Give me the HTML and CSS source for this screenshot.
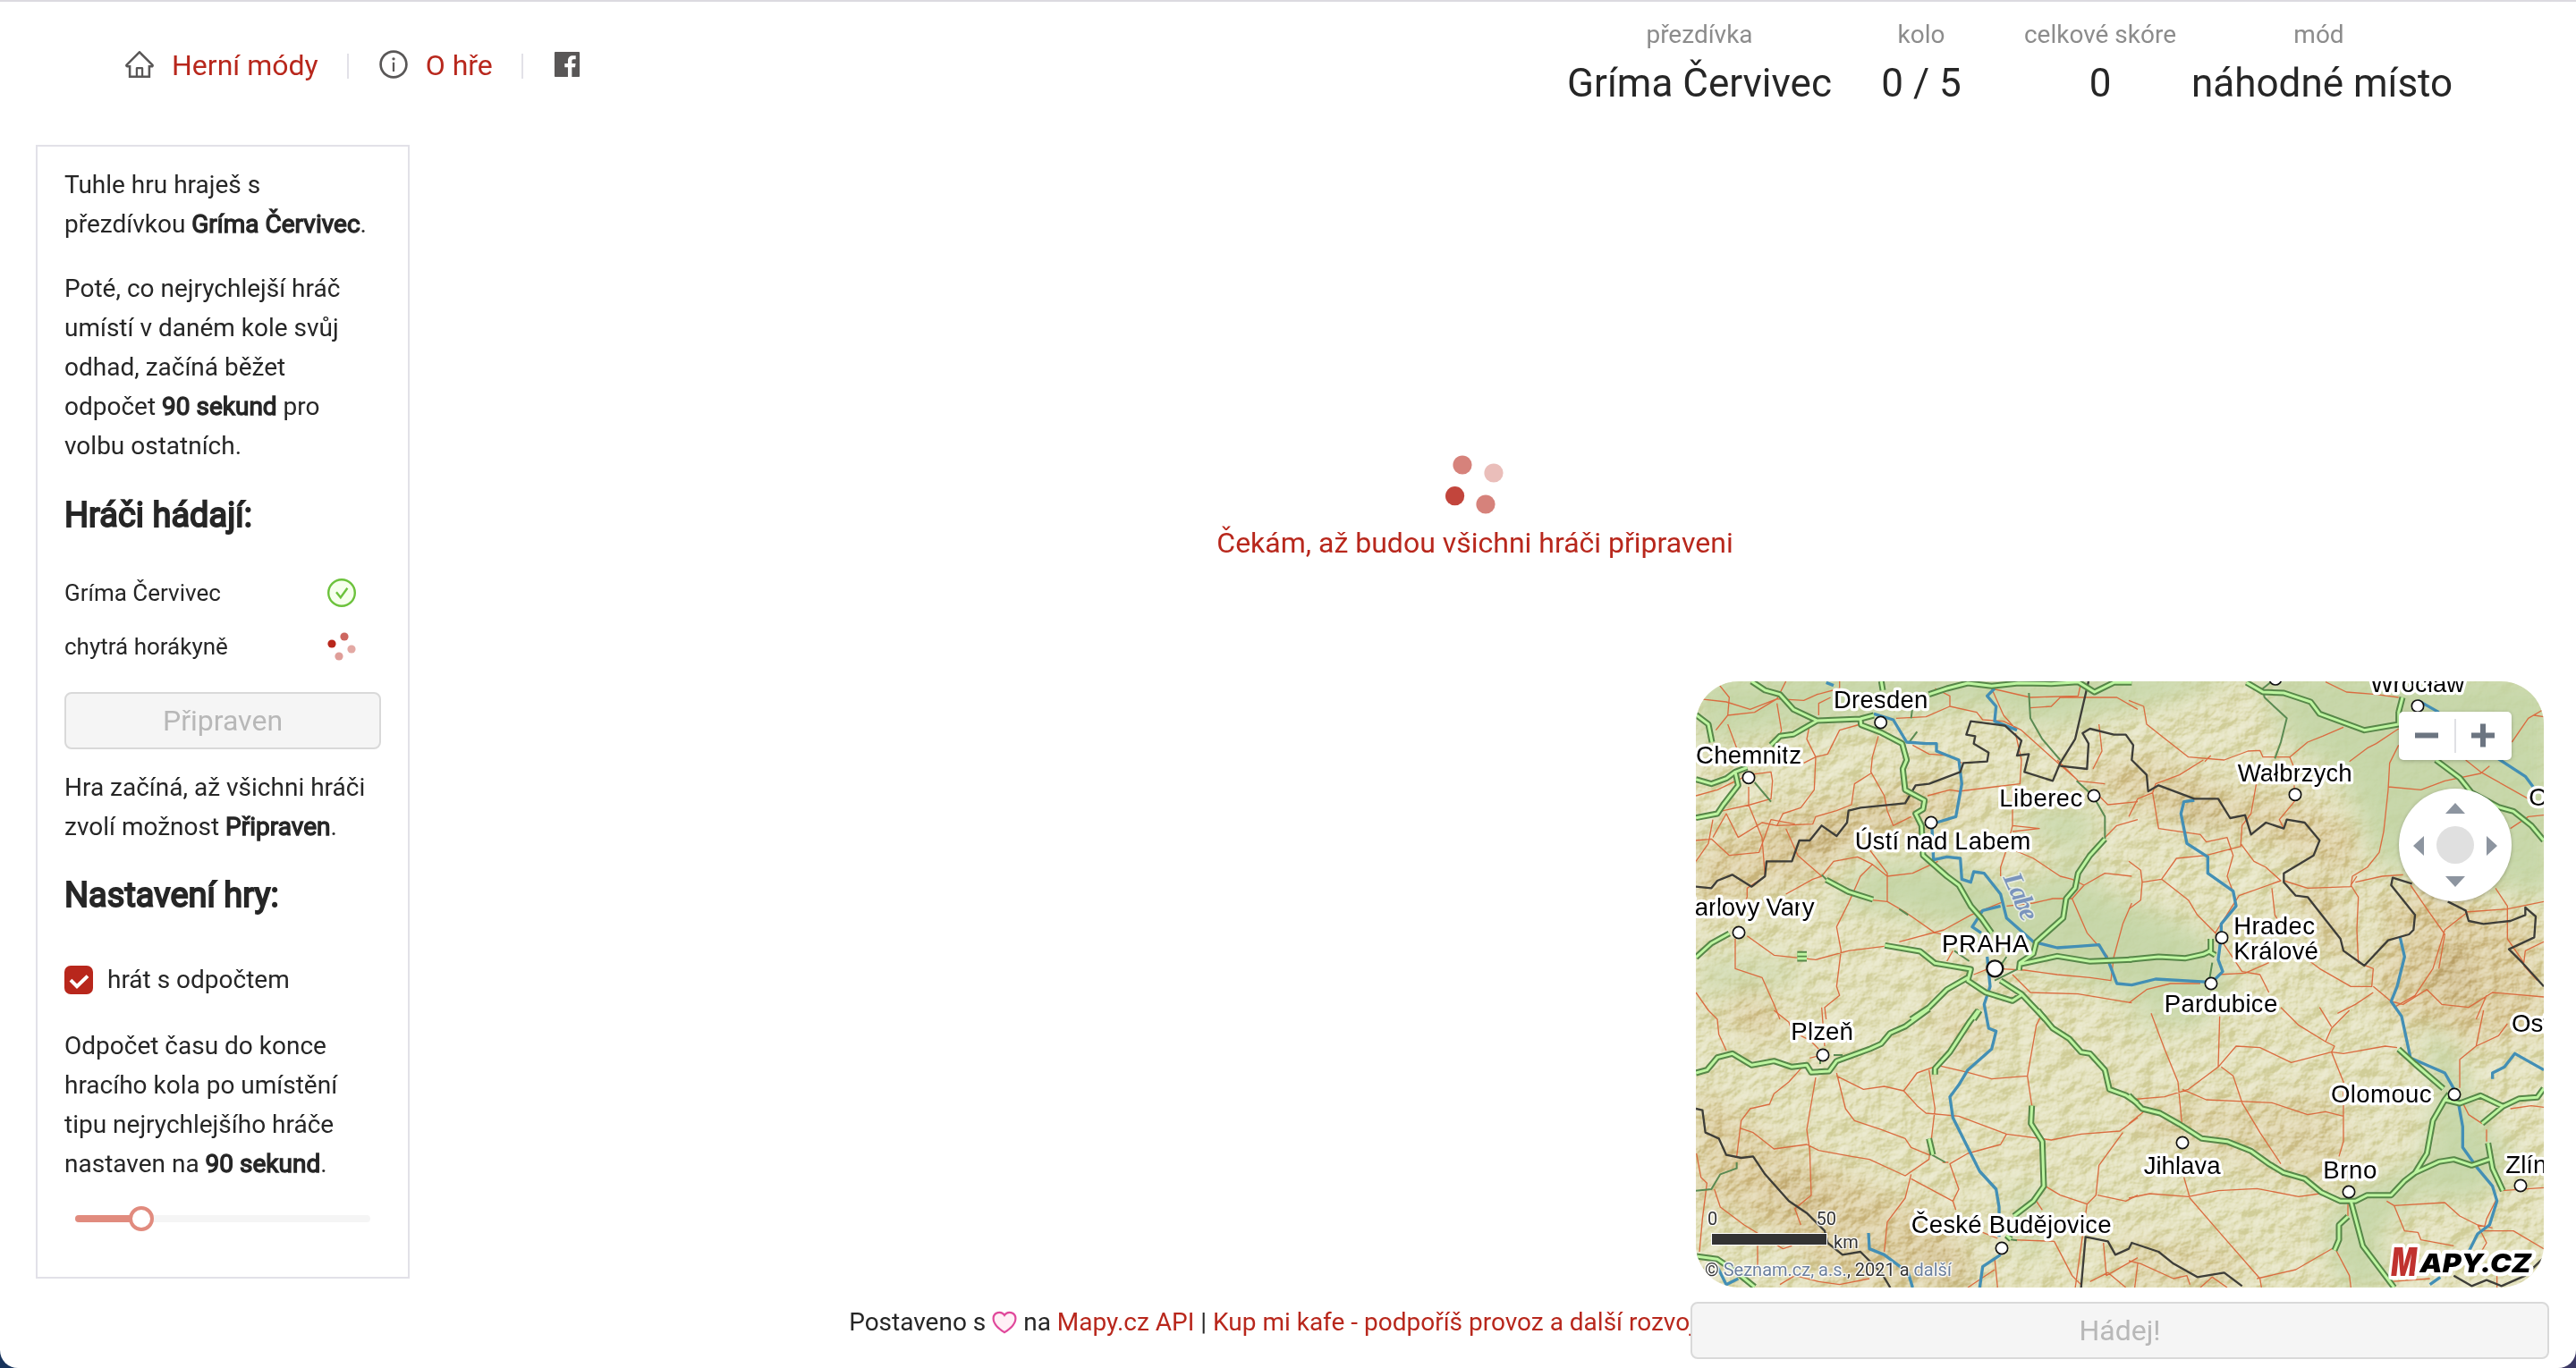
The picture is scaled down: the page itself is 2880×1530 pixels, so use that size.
FILE: index.html
```html
<!DOCTYPE html>
<html lang="cs">
<head>
<meta charset="utf-8">
<title>Náhodné místo</title>
<link rel="stylesheet" href="styles.css">
</head>
<body>
<div class="page">
  <header class="header">
    <nav class="nav">
      <a class="nav-item" href="#"><svg class="icon" viewBox="0 0 1024 1024"><path d="M946.5 505L560.1 118.8l-25.9-25.9a31.5 31.5 0 00-44.4 0L77.5 505a63.9 63.9 0 00-18.8 46c.4 35.2 29.7 63.3 64.9 63.3h42.5V940h691.8V614.3h43.4c17.1 0 33.2-6.7 45.3-18.8a63.6 63.6 0 0018.7-45.3c0-17-6.7-33.1-18.8-45.2zM568 868H456V664h112v204zm217.9-325.7V868H632V640c0-22.1-17.9-40-40-40H432c-22.1 0-40 17.9-40 40v228H238.1V542.3h-96l370-369.7 23.1 23.1L882 542.3h-96.1z"/></svg><span>Herní módy</span></a>
      <i class="divider"></i>
      <a class="nav-item" href="#"><svg class="icon" viewBox="0 0 1024 1024"><path d="M512 64C264.6 64 64 264.6 64 512s200.6 448 448 448 448-200.6 448-448S759.4 64 512 64zm0 820c-205.4 0-372-166.6-372-372s166.6-372 372-372 372 166.6 372 372-166.6 372-372 372z"/><path d="M464 336a48 48 0 1096 0 48 48 0 10-96 0zm72 112h-48c-4.4 0-8 3.6-8 8v272c0 4.4 3.6 8 8 8h48c4.4 0 8-3.6 8-8V456c0-4.4-3.6-8-8-8z"/></svg><span>O hře</span></a>
      <i class="divider"></i>
      <a class="nav-item" href="#"><svg class="icon" viewBox="0 0 1024 1024"><path d="M880 112H144c-17.7 0-32 14.3-32 32v736c0 17.7 14.3 32 32 32h736c17.7 0 32-14.3 32-32V144c0-17.7-14.3-32-32-32zm-92.4 233.5h-63.9c-50.1 0-59.8 23.8-59.8 58.8v77.1h119.6l-15.6 120.7h-104V912H539.2V602.2H434.9V481.4h104.3v-89c0-103.3 63.1-159.6 155.3-159.6 44.2 0 82.1 3.3 93.2 4.8v107.9z"/></svg></a>
    </nav>
    <dl class="stats">
      <div><dt>přezdívka</dt><dd>Gríma Červivec</dd></div>
      <div><dt>kolo</dt><dd>0 / 5</dd></div>
      <div><dt>celkové skóre</dt><dd>0</dd></div>
      <div><dt>mód</dt><dd>náhodné místo</dd></div>
    </dl>
  </header>

  <main class="main">
    <aside class="sidebar">
      <p>Tuhle hru hraješ s<br>přezdívkou <b>Gríma Červivec</b>.</p>
      <p>Poté, co nejrychlejší hráč<br>umístí v daném kole svůj<br>odhad, začíná běžet<br>odpočet <b>90 sekund</b> pro<br>volbu ostatních.</p>
      <h2>Hráči hádají:</h2>
      <ul class="players">
        <li><span>Gríma Červivec</span><svg class="status" viewBox="0 0 32 32"><circle cx="16" cy="16" r="14.8" fill="#f6ffed" stroke="#6cc23c" stroke-width="2.4"/><path d="M10 15.2l4.8 6L22.4 10.800" fill="none" stroke="#6cc23c" stroke-width="2.400"/></svg></li>
        <li><span>chytrá horákyně</span><svg class="status" viewBox="0 0 32 32" fill="#b8271c"><circle cx="19" cy="5" r="4.600" opacity=".7"/><circle cx="27" cy="19" r="4.600" opacity=".4"/><circle cx="5" cy="13" r="4.600"/><circle cx="13" cy="27" r="4.600" opacity=".45"/></svg></li>
      </ul>
      <button class="button" disabled>Připraven</button>
      <p>Hra začíná, až všichni hráči<br>zvolí možnost <b>Připraven</b>.</p>
      <h2 class="settings-title">Nastavení hry:</h2>
      <label class="check"><svg viewBox="0 0 32 32"><rect width="32" height="32" rx="7" fill="#b8271c"/><path d="M7 16.200l7 7L26 11.600" fill="none" stroke="#fff" stroke-width="4"/></svg><span>hrát s odpočtem</span></label>
      <p>Odpočet času do konce<br>hracího kola po umístění<br>tipu nejrychlejšího hráče<br>nastaven na <b>90 sekund</b>.</p>
      <div class="slider"><div class="slider-fill"></div><div class="slider-handle"></div></div>
    </aside>
    <section class="waiting">
      <svg class="spinner" viewBox="0 0 66 66" fill="#b8271c"><circle cx="19" cy="11" r="10.600" opacity=".58"/><circle cx="54" cy="20" r="10.600" opacity=".3"/><circle cx="10.600" cy="45.700" r="10.600" opacity=".86"/><circle cx="45" cy="55" r="10.600" opacity=".58"/></svg>
      <p>Čekám, až budou všichni hráči připraveni</p>
    </section>
  </main>

  <footer class="footer">
    <span>Postaveno s <svg class="heart" viewBox="0 0 28 26"><path d="M14 24.200C8 20 1.600 15.500 1.600 8.600C1.600 1.600 10.500-.4 14 5C17.500-.4 26.400 1.600 26.400 8.600C26.400 15.500 20 20 14 24.200z" fill="#fff0f6" stroke="#e0489b" stroke-width="2.200"/></svg> na <a href="#">Mapy.cz API</a> | <a href="#">Kup mi kafe - podpoříš provoz a další rozvoj</a></span>
  </footer>

  <div class="guess">
    <div class="map">
      <svg class="map-canvas" viewBox="18 36 2844 2034">
        <defs>
          <filter id="soft" x="-30%" y="-30%" width="160%" height="160%"><feGaussianBlur stdDeviation="42"/></filter>
          <filter id="relief" x="0" y="0" width="100%" height="100%" color-interpolation-filters="sRGB">
            <feTurbulence type="fractalNoise" baseFrequency="0.015 0.017" numOctaves="4" seed="11" result="n"/>
            <feColorMatrix in="n" values="0 0 0 0 0  0 0 0 0 0  0 0 0 0 0  1 0 0 0 0"/>
            <feDiffuseLighting surfaceScale="18" diffuseConstant="1" lighting-color="#fff"><feDistantLight azimuth="225" elevation="31"/></feDiffuseLighting>
          </filter>
          <g id="motorways">
            <path d="M205 36L250 66 300 80 345 130 425 168 570 162 615 150M640 36L645 66M425 168L345 214 300 220 270 250M570 162L572 182 640 208 710 245 725 300 712 330 720 400 785 435 780 465 755 480 775 520 780 620 860 690 900 720 940 790 975 830 1010 880M800 80L860 60 930 42 1010 52 1100 42 1210 44 1300 38 1355 72 1420 40 1480 40M18 148L60 180 72 240M18 365L70 380 120 362 150 340 190 325M150 340L160 385 110 450 90 480 18 494M455 702L530 742 612 768M18 962L70 915 130 882M652 922L770 942 820 982 940 1002 930 1040 990 1080 1080 1108 1110 1088M930 1030L860 1070 800 1130 740 1170M1040 1040L1110 1085 1190 1170M970 1140L950 1170M1390 565L1340 620 1300 680 1290 730 1260 765 1250 830 1160 910 1150 950 1105 980 1102 1005M1105 985L1230 958 1340 976 1480 970M358 952H390M358 966H390"/>
            <g transform="translate(1470 0)"><path d="M0 970L100 960 190 965 250 952 275 940V900M265 940L290 955M395 40L450 72 520 75 610 105 640 145 790 200 905 180V138M918 90L905 140M1030 300L1110 360 1150 410 1240 458 1290 472 1350 520 1392 570"/></g>
            <g transform="translate(0 1140)"><path d="M18 210L55 200 90 158 140 145 205 184 280 170 340 190 390 184 405 208 465 204 490 170 600 130 640 112 670 76 720 54 780 10 800 -5M965 0L935 40 870 140 820 195V215M1165 0L1215 60 1270 95 1310 140 1340 145 1390 200 1405 265 1460 285 1500 312M1145 320L1142 380 1180 440 1185 590 1150 640 1085 690M800 430L813 485M18 825L90 835 150 875 215 928M1060 755L1075 768"/></g>
            <g transform="translate(1470 1140)"><path d="M0 285L45 330 105 345 170 382 245 430 330 440 410 472 470 515 520 545 590 565 645 610 710 640 760 640 800 620 880 620 925 572 960 545 1000 480 1020 370 1060 300 1075 280M1060 300L1110 312 1180 286 1255 322 1310 296 1370 292 1392 262M1255 322L1185 380M905 130L960 180 1055 262M960 545L1040 508 1090 500 1150 520 1210 500M1205 445L1220 530 1255 605M745 640L785 790 890 930M735 692L705 720 705 770 690 805"/></g>
          </g>
        </defs>

        <rect x="18" y="36" width="2844" height="2034" fill="#e3e1bd"/>
        <g filter="url(#soft)" fill="#dccb9e" opacity=".8">
          <path d="M18 600L300 470 600 430 760 360 950 380 900 480 640 540 420 690 200 760 18 830z"/>
          <path d="M1300 330L1560 290 1830 420 2000 430 2260 540 2210 700 2050 620 1800 520 1640 500 1440 450z"/>
          <path d="M2000 700L2150 720 2240 980 2150 960zM2400 700L2840 850 2862 1200 2640 1250 2420 1190 2270 1050zM2240 740L2400 780 2380 860z"/>
          <path d="M18 1400L250 1550 420 1650 700 1770 900 1880 950 2070 500 2070 300 1900 18 1760zM200 1050L330 1170 250 1240 90 1150z"/>
          <path d="M1500 1450L2160 1420 2250 1700 2000 1700 1500 1550zM800 1150L1000 1140 1000 1290 870 1290zM1450 1900L1850 1950 1850 2070 1450 2070z" opacity=".65"/>
        </g>
        <g filter="url(#soft)" fill="#b99e6b" opacity=".4"><path d="M300 610L480 530 560 540 400 630zM560 500L740 430 750 460 640 520zM1610 430L1790 460 1770 530 1620 470zM2560 900L2640 1040 2560 1110 2480 1020zM300 1700L440 1780 430 1830 300 1760zM780 1940L900 1990 920 2060 760 2000z"/></g>
        <rect class="relief" x="18" y="36" width="2844" height="2034" filter="url(#relief)"/>
        <g filter="url(#soft)" fill="#c3d5a6" opacity=".86">
          <path d="M18 0H1900L1640 90 1200 190 980 120 700 150 300 200 18 250z"/>
          <path d="M1900 0H2900V760L2440 690 2300 640 2240 480 2160 330 2000 250z"/>
          <path d="M600 650L850 640 1050 720 1240 690 1500 780 1720 880 1820 1050 1700 1200 1440 1080 1180 1000 900 860 480 770zM1120 470L1350 470 1350 580 1150 560z"/>
          <path d="M2460 1160L2560 1280 2640 1480 2760 1640 2640 1780 2440 1760 2300 1900 2360 2070 2180 2070 2130 1860 2200 1760 2460 1650 2500 1420z"/>
          <path d="M1450 1140L1700 1130 1650 1200 1480 1200zM1080 1720L1220 1770 1160 2000 1080 1900zM1250 560L1400 700 1300 1000 1120 900zM30 960L260 960 420 1020 300 1060 30 1100z" opacity=".6"/>
        </g>

        <g class="road">
          <path d="M90 40L130 90 125 150 85 200M30 95L120 105 200 130 290 95 380 100 425 80 500 60V36M125 150L215 140 290 95 320 36M125 180L155 260M290 110L305 200 290 250M430 150L430 110 470 90M570 180L500 200 460 280 420 290 390 230 400 180M420 290L415 400 370 460 310 480 290 520M420 290L380 310M630 220L610 290 605 340 650 420 660 470 680 520 740 490M605 345L550 380 540 450 490 470 420 490 410 515 290 520 240 510 160 560 120 480 75 560M18 420L90 400 195 350 270 340 275 370 270 430 200 450 110 470 18 500M195 390V450L240 560 250 690M18 570L70 565 130 620 230 610 270 500 350 515M18 640L60 580 75 500M320 530L360 620 440 690 480 640 560 625 610 650 570 690 530 780 490 860 505 940 490 1060 500 1090 450 1130 455 1170M610 650L660 690 745 680 830 640M600 600L660 680V775L610 770M660 775L720 810 820 880 930 900M690 160L790 155 870 120 960 140 980 165 1050 170 1110 200 1210 290 1290 360M870 120L870 85 820 60M1010 60L1140 90 1300 85 1310 40M1140 125L1210 120 1240 90 1430 90 1500 130M1010 60L1050 150 1090 195M1090 210L1110 300 1105 380 1020 390 900 405 870 400 795 420M1080 400L1080 520 1060 600 1040 660V690M1080 540L1170 530 1080 520M1080 600L1150 630 1240 690 1280 700 1320 720 1390 680 1480 690M1320 720L1280 765 1215 765 1150 780 1060 790M1280 765L1330 880 1400 960M1480 780L1450 850 1420 960 1410 1040 1340 1030 1230 1020 1120 1005 1030 1000M700 910L850 870 940 820 1050 775M190 890L280 955 420 970 530 940 650 925M150 900V1000L240 1030 280 1120 300 1170M190 760V730L250 690M160 830L190 760M320 750L410 700 440 690M1080 1020L1140 1080 1300 1085 1480 1115M1390 560L1430 520 1500 500M1350 400L1400 450 1500 440M1370 180L1380 270 1350 330M1230 300L1300 370 1390 380M745 250L800 280 870 285 910 310M880 940L860 975M950 1020L1000 1000M60 1140L18 1080"/>
          <g transform="translate(1470 0)"><path d="M0 100L50 120 60 180 110 220 200 290 320 300 400 270 440 268 450 290 540 290 600 240 650 220 720 190M250 300L170 350 90 380 80 410 30 430 0 490M275 285L255 305M660 38L730 72 830 80 905 90M740 305L800 260 830 245 905 195M905 250L875 310 870 400 855 540 840 610 800 660 750 690 745 725 600 730 520 705M870 390L980 400 1060 370 1180 345 1210 320M1130 300L1180 340 1340 430M1285 240L1340 160 1392 130M1360 150L1392 155M1280 530L1340 490 1392 485M555 385V440L505 500 520 530M540 290L560 340 540 370M440 310L410 480 380 520 375 590 260 620M80 410L100 530 240 550 260 575 330 560 350 620 330 690 360 770M375 580L420 640 460 660 510 705 370 755 290 880M0 640L40 670 45 710 40 770 0 800M45 710L110 700 160 630 260 620M110 700L200 770 230 820 300 890 380 1010 440 1020 470 1080M480 730L490 820 520 870M765 690L745 720 770 760 765 870 770 980 820 1000 815 1060 745 1060 640 1000 600 970M760 710L850 690 920 685M945 720L1000 800 1060 885 1040 1000M1130 810L1270 800 1392 775M1230 730L1270 790V900L1325 980 1330 940 1392 910M1325 990L1370 1040M1130 815L1060 870 1020 1000 960 1090 890 1130M300 1020L390 1015 470 980M0 1115L60 1070 140 1050 240 1050M820 1060L880 1110 920 1120 1000 1070 1050 1120 1140 1130 1220 1080 1392 1095M820 1080L760 1120 700 1150M1200 1090L1165 1170"/></g>
          <g transform="translate(0 1140)"><path d="M60 0L90 30 95 80 120 135M280 0L330 40 340 70 400 100 430 130M440 -10L450 120M400 160L440 150M375 190L330 240 280 280 265 315 200 330 170 370 155 490M165 395L210 410 280 465 390 450 430 470 540 490 600 500 720 555 800 500 820 330 800 200M420 225L390 400 400 470 405 620 350 665 370 720M490 210L520 330 550 370 640 400 720 430 740 460 800 485M490 220L580 265 650 255 715 270 760 210 830 185M715 270L760 320 790 345 900 355 1060 415 1210 435 1310 415 1440 405 1500 360M830 185L930 208 1010 230 1130 220 1160 50 1180 10M1130 220L1145 320M1060 415L1040 450 930 480 870 515 900 600 880 640 740 565M880 640L890 670M740 550L720 630 660 710 650 810M865 510L845 510M1450 410L1370 520 1360 620 1330 650 1280 1005M1365 620L1460 640 1500 620M1190 590L1240 620 1330 650M1160 640L1180 670M20 480L35 560 55 580 40 700 30 810M80 600L100 660 180 720 310 800 340 790M225 790V870M300 920L350 890 430 910 500 920 600 900M1080 770L1220 775 1280 890 1310 920M980 745L1030 765M1020 830L1030 930M930 930L1020 870M1385 780L1395 890 1500 830M1340 910L1400 880 1460 930"/></g>
          <g transform="translate(1470 1140)"><path d="M75 10L120 130 165 240 180 400M305 20L300 190 200 265 120 290 0 300M180 265L260 300 370 305 480 310 600 350 660 340 720 355M300 190L360 120 440 125 545 175 680 140 720 145 860 120 900 125M310 190L350 220 380 310 440 410 510 515M510 -10L570 50 660 105 690 120 680 140 720 240 720 440 705 490M660 105L680 60 740 0M640 -10L680 55M1190 0L1165 120 1110 165V260M1165 120L1240 85 1270 45M1200 400V440M1120 310L1140 350 1185 380M1280 330L1350 320 1392 325M0 630L70 615 200 625 300 605 430 598 570 625 640 615M185 560L205 630 300 740 440 900 445 930M430 900L560 870 690 795 740 890 745 930M735 640V690M865 640L890 655 1060 645 1110 690 1170 720 1220 730M890 655L925 740 970 745 980 770 1090 790M1235 630L1200 700 1190 740 1290 740 1392 800M1250 605L1392 595M0 840L40 850 150 900 195 890 205 920M30 850L20 930M240 930L280 895 330 930M0 380L50 340M1170 720L1200 780 1170 830M880 910L1010 900M1235 890V930"/></g>
        </g>
        <g class="minor">
          <path d="M1135 75L1140 160 1180 230 1240 300M215 375L270 440M440 685L460 705M1295 370L1350 420 1390 490V565M700 800L730 820M740 160L745 120M730 245L760 205M885 940L935 975M1020 1040L1100 1000M1040 990L1060 960M435 1290V1320M480 1290H510"/>
          <path d="M1925 90L2000 160 1980 240 1960 295M1945 40L1920 60 1925 90M1740 1040L1750 980M155 1650L155 1670 100 1690 70 1740 18 1745M810 1625L855 1650M1070 1908L1095 1912"/>
        </g>
        <g class="river">
          <path d="M615 145L680 165 725 240 790 245 825 245 825 270 900 300 910 380 890 490 825 510M810 530L815 635 860 625 905 630 910 700 940 710 950 675 985 680 1040 750 1060 830 1150 910 1230 930 1300 925 1370 920 1400 970 1430 1050 1480 1055 1560 1035 1740 1045M1040 790L980 805 945 860 975 880M995 960L1005 1060 985 1120 1000 1200 1025 1210 1010 1270 930 1340 900 1390 870 1430 880 1500 920 1580 970 1680 1025 1740 1035 1800V1900M1040 1960L980 2000 970 2070M1020 60L995 85 1025 120 1020 170 1095 200M455 40L480 50"/>
          <path d="M1690 435L1655 440 1645 480 1665 580 1735 625 1735 680 1820 740 1830 790 1780 850V890L1770 970 1785 1010 1745 1050M2380 895L2395 960 2370 1060 2350 1110 2385 1160 2415 1300 2530 1350 2570 1420 2590 1530 2590 1600 2640 1670 2690 1730 2705 1780 2680 1860 2640 1890 2610 1950M2480 2060L2515 2035M2690 1370V1350L2730 1330 2765 1285 2862 1340M2440 100L2510 140M2700 290L2800 355 2830 395M597 1887L600 1940 650 1960 730 2020 745 2070M90 2000L120 2060 160 2040"/>
        </g>
        <g class="border">
          <path d="M18 725L70 730 90 705 140 685 205 725 250 690 255 640 340 640 365 570 400 570 440 520 490 555 525 510 530 470 570 460 720 445 755 385 800 380 905 340 915 310 995 305 1000 275 950 245 955 220 925 215 940 170 1055 185 1110 235 1095 285 1135 280 1120 340 1215 370 1240 310 1290 230 1335 36M1240 320L1330 330 1335 245 1315 210 1340 195 1420 215 1460 215 1485 250 1480 300 1530 350 1535 405 1570 385 1690 430 1770 430 1810 495 1860 485 1880 550 1930 510 1990 530 2000 500 2060 510 2110 570 2090 620 1990 680 1990 710 2030 755 2070 760 2180 900 2190 940 2260 990 2340 905 2410 885 2425 870 2430 820 2350 720 2355 695 2420 715M2540 775L2600 805 2610 840 2660 850 2750 840 2800 820V795L2835 825 2830 895 2745 935 2790 980 2862 1060"/>
          <path d="M18 1470L40 1475 50 1550 95 1570 120 1625 170 1635 210 1630 250 1690 330 1780 390 1820 450 1880 460 1920 510 1960 570 1950 640 2020 670 2070M1310 2070L1325 1900 1400 1915 1425 1960 1470 1940 1480 1920 1570 1950 1620 1990 1700 2035 1790 2020 1850 2065M2560 2030L2620 2065 2670 2045 2720 2065 2800 2030 2862 1970"/>
        </g>
        <use href="#motorways" class="mw-case"/>
        <use href="#motorways" class="mw-core"/>

        <g class="town">
          <circle cx="638" cy="174" r="20"/><circle cx="195" cy="359" r="20"/><circle cx="807" cy="510" r="20"/><circle cx="1353" cy="420" r="20"/><circle cx="162" cy="879" r="20"/><circle cx="1021" cy="1000" r="27" stroke-width="7"/><circle cx="1782" cy="896" r="20"/><circle cx="1746" cy="1050" r="20"/><circle cx="2028" cy="416" r="20"/><circle cx="2439" cy="119" r="20"/><circle cx="1962" cy="28" r="20"/><circle cx="444" cy="1290" r="20"/><circle cx="1044" cy="1938" r="20"/><circle cx="1650" cy="1584" r="20"/><circle cx="2208" cy="1749" r="20"/><circle cx="2562" cy="1422" r="20"/><circle cx="2784" cy="1728" r="20"/>
        </g>
        <g class="label">
          <text x="480" y="125" textLength="316">Dresden</text><text x="18" y="313" textLength="354">Chemnitz</text>
          <text x="1036" y="457" textLength="279">Liberec</text><text x="551" y="599" textLength="590">Ústí nad Labem</text>
          <text x="-40" y="823" textLength="456">Karlovy Vary</text><text x="843" y="946" textLength="292">PRAHA</text>
          <text x="2280" y="73" textLength="316">Wrocław</text><text x="1835" y="371" textLength="384">Wałbrzych</text>
          <text x="1822" y="884" textLength="272">Hradec</text><text x="1822" y="970" textLength="284">Králové</text>
          <text x="1589" y="1145" textLength="380">Pardubice</text><text x="2812" y="452">Opole</text>
          <text x="337" y="1238" textLength="209">Plzeň</text><text x="740" y="1886" textLength="672">České Budějovice</text>
          <text x="1520" y="1690" textLength="258">Jihlava</text><text x="2122" y="1703" textLength="180">Brno</text>
          <text x="2148" y="1448" textLength="338">Olomouc</text><text x="2754" y="1213">Ostrava</text><text x="2734" y="1685">Zlín</text>
          <text class="water" transform="translate(1048 694) rotate(66)" textLength="166">Labe</text>
        </g>
        <g class="logo"><text x="2350" y="2030" textLength="86" lengthAdjust="spacingAndGlyphs" class="logo-m">M</text><text x="2446" y="2018" textLength="374" lengthAdjust="spacingAndGlyphs">APY.CZ</text></g>
      </svg>
      <div class="zoom"><svg viewBox="0 0 126 54"><path d="M18 26.500H44M81 26.500H107M94 13.500V39.500" stroke="#6c7581" stroke-width="6"/><path d="M63 8V46" stroke="#dfe0e4" stroke-width="2"/></svg></div>
      <div class="pan"><svg viewBox="0 0 126 126"><circle cx="63" cy="63" r="21" fill="#e0e0e0"/><path d="M63 16L74 28H52zM63 110L74 98H52zM16 64L28 53V75zM110 64L98 53V75z" fill="#8d95a0"/></svg></div>
      <div class="scale"><div class="scale-ends"><span>0</span><span>50</span></div><div class="scale-row"><i></i><span>km</span></div></div>
      <div class="copyright">© <a>Seznam.cz, a.s.</a>, 2021 a <a>další</a></div>
    </div>
    <button class="button guess-button" disabled>Hádej!</button>
  </div>
</div>
</body>
</html>
```
FILE: styles.css
```css
* { box-sizing: border-box; }
body { margin: 0; background: linear-gradient(90deg, #17335b 0 50%, #3b3864 50%); font-family: Roboto, "Liberation Sans", sans-serif; font-size: 28px; line-height: 44px; color: #262626; }
a { color: #b8271c; text-decoration: none; }
p, dl, dd, ul { margin: 0; padding: 0; }
b { font-weight: 400; -webkit-text-stroke: 1.3px currentColor; }
.page { position: relative; height: 1530px; overflow: hidden; display: flex; flex-direction: column; background: #fff; border-top: 2px solid #dcdae0; border-radius: 0 0 20px 20px; }

.header { height: 160px; flex: none; display: flex; justify-content: space-between; padding: 0 145px 0 138px; }
.nav { display: flex; align-items: center; height: 140px; font-size: 32px; }
.nav-item { display: flex; align-items: center; gap: 18px; }
.nav-item span { padding-top: 1px; }
.icon { width: 36px; height: 36px; fill: #595757; }
.divider { width: 2px; height: 28px; margin: 4px 32px 0; background: #e2e1e8; }
.divider:last-of-type { margin-right: 31px; }
.stats { display: grid; grid-template-columns: 300px 196px 204px 285px; padding-top: 15px; text-align: center; white-space: nowrap; }
.stats dt { color: #8c8c8c; }
.stats dd { font-size: 44px; line-height: 64px; }

.main { display: flex; height: 1268px; flex: none; padding: 0 40px; }
.sidebar { width: 418px; flex: none; padding: 21px 30px 0; border: 2px solid #e2e1e8; white-space: nowrap; }
.sidebar p { margin-bottom: 28px; }
.sidebar h2 { margin: -1px 0 29px; font-size: 38px; line-height: 56px; font-weight: 400; -webkit-text-stroke: 1.9px currentColor; }
.sidebar .settings-title { margin-top: -2px; margin-bottom: 45px; }
.players { list-style: none; font-size: 26px; padding-bottom: 21px; }
.players li { display: flex; justify-content: space-between; align-items: center; height: 60px; padding-right: 28px; }
.status { width: 32px; height: 32px; }
.button { display: block; width: 100%; height: 64px; margin: 0 0 21px; padding: 0; border: 2px solid #d9d9d9; border-radius: 8px; background: #f5f5f5; color: #b8b8b8; font: 32px/61px Roboto, sans-serif; text-align: center; }
.check { display: flex; align-items: center; gap: 16px; height: 44px; margin-bottom: 30px; }
.check svg { width: 32px; height: 32px; }
.slider { position: relative; height: 8px; margin: 35px 12px 0; border-radius: 4px; background: #f5f5f5; }
.slider-fill { width: 74px; height: 8px; border-radius: 4px; background: #e18b7e; }
.slider-handle { position: absolute; left: 60px; top: -10px; width: 28px; height: 28px; border: 4px solid #e18b7e; border-radius: 50%; background: #fff; }

.waiting { flex: 1; display: flex; flex-direction: column; align-items: center; padding-top: 347px; font-size: 32px; color: #b8271c; }
.spinner { width: 66px; height: 66px; margin-bottom: 10px; }
.footer { padding: 27px 35px 0 0; text-align: center; white-space: nowrap; }
.heart { width: 28px; height: 26px; vertical-align: -4px; }

.guess { position: absolute; right: 30px; bottom: 10px; width: 960px; }
.map { position: relative; width: 948px; height: 678px; margin: 0 6px 16px; border-radius: 48px; overflow: hidden; }
.guess-button { margin: 0; }
.map-canvas { display: block; width: 948px; height: 678px; }
.relief { mix-blend-mode: soft-light; opacity: .75; }
.road { fill: none; stroke: #da6c40; stroke-width: 4; stroke-linejoin: round; }
.minor { fill: none; stroke: #5a8a52; stroke-width: 6; stroke-linejoin: round; }
.river { fill: none; stroke: #438fb5; stroke-width: 10; stroke-linejoin: round; }
.border { fill: none; stroke: #3d3d38; stroke-width: 7; stroke-linejoin: round; }
.mw-case { fill: none; stroke: #568748; stroke-width: 21; stroke-linejoin: round; }
.mw-core { fill: none; stroke: #bdf5a0; stroke-width: 9; stroke-linejoin: round; }
.town { fill: #fff; stroke: #111; stroke-width: 5; }
.label { font-family: "Liberation Sans", Arial, sans-serif; font-size: 83px; fill: #000; stroke: #fff; stroke-width: 20; stroke-linejoin: round; paint-order: stroke; }
.water { font-family: "Liberation Serif", serif; font-size: 92px; font-style: italic; font-weight: 700; fill: #7a94bd; stroke: #e6ecdf; stroke-width: 10; }
.logo { font: italic 900 86px "Inter", sans-serif; fill: #000; stroke: #fff; stroke-width: 26; stroke-linejoin: round; paint-order: stroke; }
.logo-m { font-size: 130px; fill: #c0322f; }
.zoom, .pan { position: absolute; right: 36px; width: 126px; background: #fff; box-shadow: 0 1px 4px rgba(0, 0, 0, .25); }
.zoom { top: 34px; height: 54px; border-radius: 5px; }
.pan { top: 120px; height: 126px; border-radius: 50%; }
.zoom svg, .pan svg { display: block; }
.scale, .copyright { position: absolute; color: #333; font-size: 20px; line-height: 24px; text-shadow: 1px 1px 1px #fff, -1px -1px 1px #fff, 1px -1px 1px #fff, -1px 1px 1px #fff, 0 0 3px #fff, 0 0 3px #fff; }
.scale { left: 18px; bottom: 42px; }
.scale-ends { display: flex; justify-content: space-between; width: 144px; margin: 0 0 5px -5px; }
.scale-row { display: flex; gap: 8px; align-items: flex-start; height: 18px; }
.scale-row i { width: 128px; height: 12px; background: #333; box-shadow: 0 0 0 1px #fff; }
.scale-row span { line-height: 18px; }
.copyright { left: 10px; bottom: 8px; }
.copyright a { color: #6b7f9c; }
```
